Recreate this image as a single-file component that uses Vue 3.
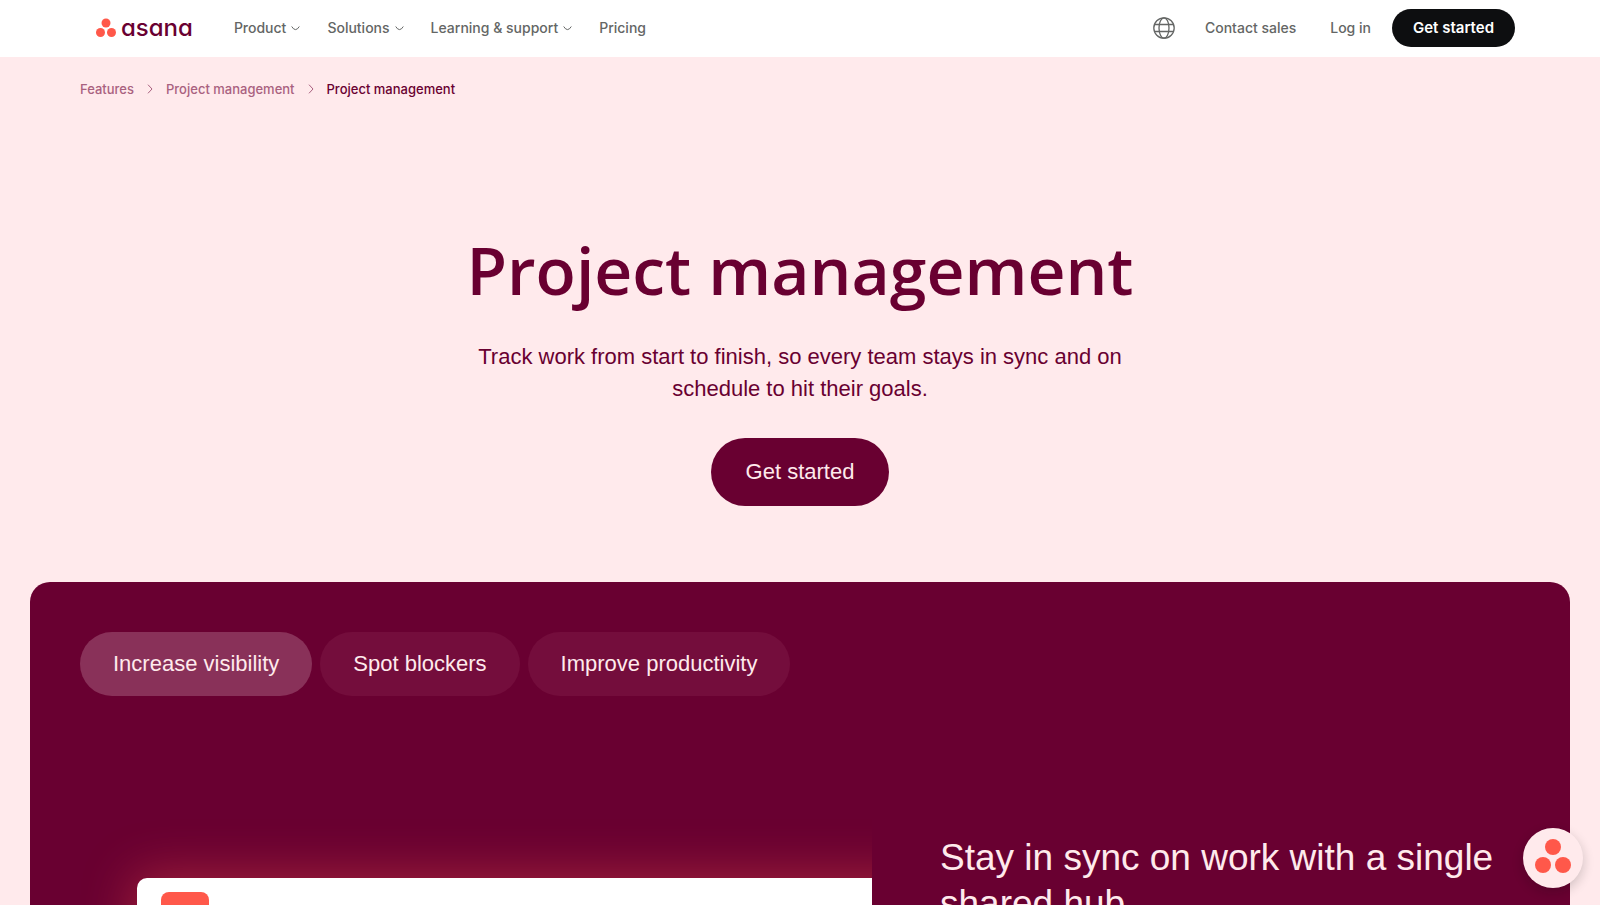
<script setup>
import { ref } from 'vue'

const menus = [
  { label: 'Product', menu: true },
  { label: 'Solutions', menu: true },
  { label: 'Learning & support', menu: true },
  { label: 'Pricing', menu: false },
]
const tabs = ['Increase visibility', 'Spot blockers', 'Improve productivity']
const active = ref(0)
</script>

<template>
  <div class="page">
    <header class="topbar">
      <a class="logo" href="#" aria-label="asana home">
        <svg width="20" height="20" viewBox="0 0 20 20" aria-hidden="true">
          <circle cx="10" cy="5" r="4.5" />
          <circle cx="4.5" cy="14.5" r="4.5" />
          <circle cx="15.5" cy="14.5" r="4.5" />
        </svg>
        <span>asana</span>
      </a>
      <nav class="menu" aria-label="Main">
        <template v-for="m in menus" :key="m.label">
          <button v-if="m.menu" class="nav-item" type="button">
            {{ m.label }}
            <svg width="9" height="6" viewBox="0 0 9 6" aria-hidden="true"><path d="M.7 1.500Q2.500 4.600 4.500 4.600T8.300 1.500" /></svg>
          </button>
          <a v-else class="nav-item" href="#">{{ m.label }}</a>
        </template>
      </nav>
      <div class="actions">
        <button class="globe" type="button" aria-label="Language">
          <svg width="22" height="22" viewBox="0 0 22 22" aria-hidden="true">
            <circle cx="11" cy="11" r="10.200" />
            <ellipse cx="11" cy="11" rx="5" ry="10.200" />
            <path d="M1.800 7.500h18.400M1.800 14.500h18.400" />
          </svg>
        </button>
        <a class="nav-item" href="#">Contact sales</a>
        <a class="nav-item login" href="#">Log in</a>
        <a class="start" href="#">Get started</a>
      </div>
    </header>

    <nav class="crumbs" aria-label="Breadcrumb">
      <a href="#">Features</a>
      <svg width="6" height="10" viewBox="0 0 6 10" aria-hidden="true"><path d="M1 .7L5 5 1 9.300" /></svg>
      <a href="#">Project management</a>
      <svg width="6" height="10" viewBox="0 0 6 10" aria-hidden="true"><path d="M1 .7L5 5 1 9.300" /></svg>
      <span aria-current="page">Project management</span>
    </nav>

    <section class="hero">
      <h1>Project management</h1>
      <p>Track work from start to finish, so every team stays in sync and on schedule to hit their goals.</p>
      <a class="cta" href="#">Get started</a>
    </section>

    <section class="panel">
      <div class="tabs" role="tablist">
        <button
          v-for="(t, i) in tabs"
          :key="t"
          type="button"
          role="tab"
          class="tab"
          :class="{ on: active === i }"
          :aria-selected="active === i"
          @click="active = i"
        >{{ t }}</button>
      </div>
      <div class="stage">
        <div class="preview">
          <div class="sheet"><div class="tile"></div></div>
        </div>
        <h2>Stay in sync on work with a single shared hub</h2>
      </div>
    </section>

    <button class="chat" type="button" aria-label="Open chat">
      <svg width="36" height="34" viewBox="0 0 36 34" aria-hidden="true">
        <circle cx="18" cy="8" r="8" />
        <circle cx="8" cy="26" r="8" />
        <circle cx="28" cy="26" r="8" />
      </svg>
    </button>
  </div>
</template>

<style>
body {
  margin: 0;
  background: #ffeaec;
}
</style>

<style scoped>
.page {
  display: flex;
  flex-direction: column;
  height: 100vh;
  overflow: hidden;
  background: #ffeaec;
  color: #690031;
  font-family: "Liberation Sans", Arial, sans-serif;
}
.page * {
  box-sizing: border-box;
}
a {
  color: inherit;
  text-decoration: none;
}
button {
  border: 0;
  padding: 0;
  background: none;
  color: inherit;
  font: inherit;
  cursor: pointer;
}
svg {
  flex: none;
  display: block;
}
.topbar {
  display: flex;
  align-items: center;
  flex: none;
  height: 57px;
  padding: 0 85px 2px 96px;
  background: #fff;
  color: #646665;
  font-family: Inter, sans-serif;
  font-size: 14px;
  font-weight: 500;
}
.logo {
  display: flex;
  align-items: center;
  gap: 5px;
  color: #690031;
}
.logo svg {
  fill: #ff584a;
}
.logo span {
  font-size: 24px;
  line-height: 24px;
  font-weight: 500;
  font-feature-settings: "cv11";
}
.menu {
  display: flex;
  gap: 27px;
  margin-left: 41px;
}
.nav-item {
  display: flex;
  align-items: center;
  gap: 5px;
  white-space: nowrap;
}
.nav-item svg,
.globe svg,
.crumbs svg {
  fill: none;
  stroke: currentColor;
}
.globe svg {
  stroke-width: 1.3;
}
.actions {
  display: flex;
  align-items: center;
  margin-left: auto;
}
.globe {
  margin-right: 30px;
}
.login {
  margin: 0 21px 0 34px;
}
.start {
  padding: 0 21px;
  border-radius: 19px;
  background: #0d0e10;
  color: #fff;
  font-size: 15px;
  line-height: 38px;
  font-weight: 600;
}
.crumbs {
  display: flex;
  align-items: center;
  flex: none;
  gap: 13px;
  height: 64px;
  padding: 0 80px;
  color: #a9617f;
  font-family: Inter, sans-serif;
  font-size: 13px;
  font-weight: 500;
}
.crumbs span {
  color: #690031;
}
.hero {
  display: flex;
  flex-direction: column;
  align-items: center;
  flex: none;
  padding-top: 104px;
  text-align: center;
}
h1 {
  margin: 0;
  font-family: "Open Sans", "Noto Sans", sans-serif;
  font-size: 66px;
  line-height: 88px;
  font-weight: 600;
}
.hero p {
  max-width: 680px;
  margin: 28px 0 33px;
  font-size: 22px;
  line-height: 32px;
}
.cta {
  padding: 0 35px;
  border-radius: 34px;
  background: #690031;
  color: #ffeaec;
  font-size: 22px;
  line-height: 68px;
}
.panel {
  flex: 1;
  min-height: 0;
  margin: 76px 30px 0;
  padding: 50px 50px 0;
  border-radius: 20px 20px 0 0;
  background: #690031;
  overflow: hidden;
}
.tabs {
  display: flex;
  gap: 8px;
}
.tab {
  height: 64px;
  padding: 0 33px;
  border-radius: 32px;
  background: #740d3c;
  color: #ffeaec;
  font-size: 22px;
  white-space: nowrap;
}
.tab.on {
  background: #893159;
}
.stage {
  display: grid;
  grid-template-columns: 11fr 9fr;
  margin-top: 82px;
}
.preview {
  padding: 100px 0 0 57px;
  overflow: hidden;
}
.sheet {
  width: 110%;
  height: 480px;
  padding: 14px 24px;
  border-radius: 10px;
  background: #fff;
  box-shadow: 0 0 50px 4px rgba(255, 88, 74, 0.38);
}
.tile {
  width: 48px;
  height: 48px;
  border-radius: 8px;
  background: #ff584a;
}
h2 {
  margin: 0;
  padding: 57px 0 0 68px;
  color: #ffeaec;
  font-size: 37px;
  line-height: 46px;
  font-weight: 400;
}
.chat {
  position: fixed;
  right: 17px;
  bottom: 17px;
  display: grid;
  place-items: center;
  width: 60px;
  height: 60px;
  padding-bottom: 4px;
  border-radius: 50%;
  background: #ffeaec;
  box-shadow: 0 4px 12px rgba(13, 14, 16, 0.2);
}
.chat svg {
  fill: #ff584a;
}
</style>
